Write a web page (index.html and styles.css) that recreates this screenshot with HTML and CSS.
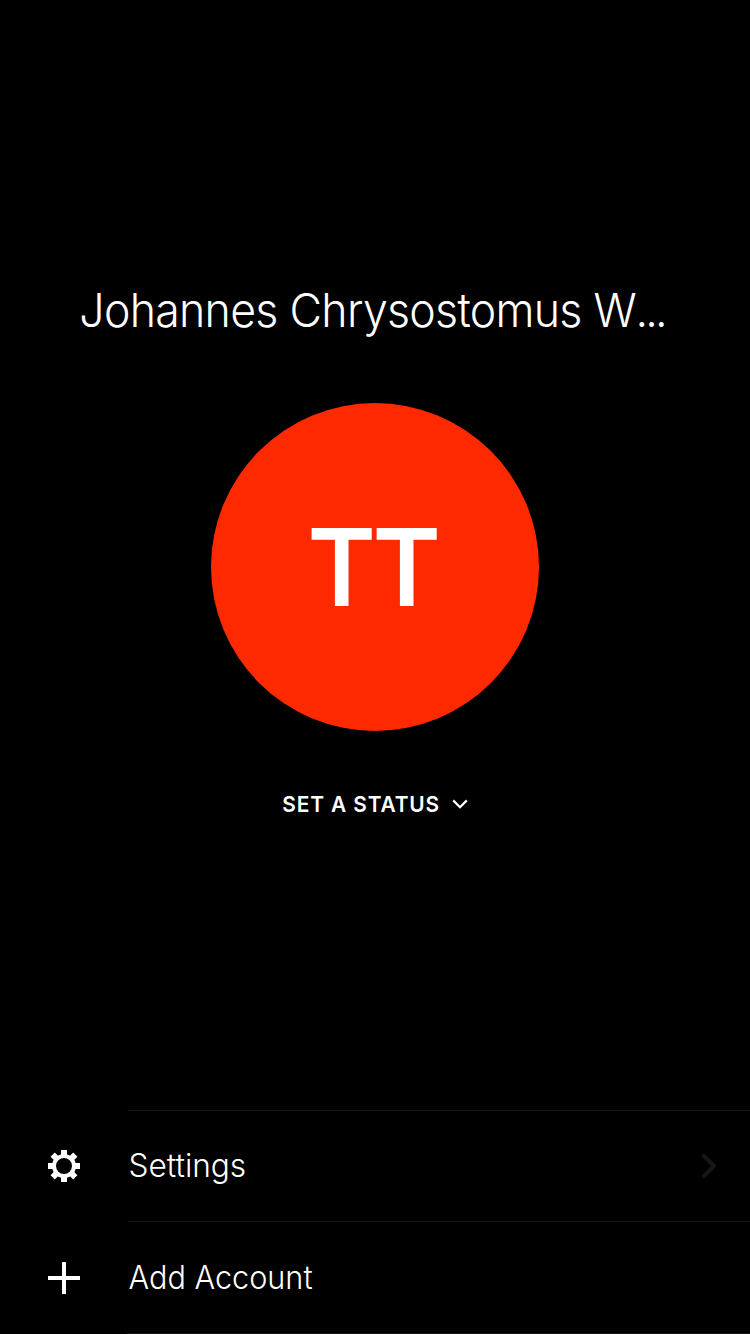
FILE: index.html
```html
<!DOCTYPE html>
<html lang="en">
<head>
<meta charset="utf-8">
<title>Profile</title>
<link rel="stylesheet" href="styles.css">
</head>
<body>
<main class="screen">
  <section class="profile">
    <h1 class="name">Johannes Chrysostomus W<span class="dots">...</span></h1>
    <div class="avatar"><span class="initials">TT</span></div>
    <button class="status"><span class="status-label">SET A STATUS</span>
      <svg class="chevron-down" viewBox="0 0 16 10"><path d="M1.2 1.4 8 8.2l6.8-6.8"/></svg>
    </button>
  </section>
  <nav class="menu">
    <a class="row">
      <svg class="icon" viewBox="0 0 32 32">
        <g fill="#fff"><path id="tooth" d="M13 0h6v6h-6zM13 26h6v6h-6zM0 13h6v6H0zM26 13h6v6h-6z"/><use href="#tooth" transform="rotate(45 16 16)"/></g>
        <circle cx="16" cy="16" r="10" fill="#000" stroke="#fff" stroke-width="4"/>
      </svg>
      <span class="cell"><span class="settings-text">Settings</span>
        <svg class="chevron-right" viewBox="0 0 16 26"><path d="M3 3l10 10L3 23"/></svg>
      </span>
    </a>
    <a class="row">
      <svg class="icon" viewBox="0 0 32 32"><path d="M14 0h4v14h14v4H18v14h-4V18H0v-4h14z" fill="#fff"/></svg>
      <span class="cell"><span class="add-text">Add Account</span></span>
    </a>
  </nav>
</main>
</body>
</html>
```
FILE: styles.css
```css
* { box-sizing: border-box; }
body { margin: 0; background: #000; color: #fff; font-family: Inter, "Liberation Sans", sans-serif; }
.screen { width: 750px; height: 1334px; display: flex; flex-direction: column; justify-content: space-between; overflow: hidden; }
.profile { padding-top: 280px; display: flex; flex-direction: column; align-items: center; }
.name { margin: 0 0 63px; width: 590px; height: 60px; font-size: 47px; line-height: 60px; font-weight: 300; white-space: nowrap; letter-spacing: -0.75px; transform: translate(-0.7px, 0.4px) scaleX(0.95); transform-origin: left; }
.dots { margin-left: -0.5px; letter-spacing: -3px; }
.avatar { width: 328px; height: 328px; border-radius: 50%; background: #ff2900; display: flex; align-items: center; justify-content: center; }
.initials { font-size: 107px; line-height: 128px; font-weight: 600; letter-spacing: -3.5px; transform: translateX(-2.7px) scaleX(0.968); }
.status { margin-top: 57px; height: 32px; padding: 0; border: 0; background: none; color: #fff; font: 600 22px/32px Inter, sans-serif; display: flex; align-items: center; gap: 12px; }
.status-label { width: 158px; letter-spacing: 0.9px; white-space: nowrap; transform: translateX(0.3px) scaleX(0.95); transform-origin: left; }
.chevron-down { width: 16px; height: 10px; fill: none; stroke: #fff; stroke-width: 2.2; }
.menu { height: 224px; border-bottom: 1px solid #171717; border-image: linear-gradient(to right, transparent 128px, #171717 128px) 1; }
.row { height: 111px; display: flex; align-items: center; padding-left: 48px; }
.row + .row { height: 113px; }
.icon { width: 32px; height: 32px; margin-right: 48px; }
.cell { flex: 1; height: 100%; display: flex; align-items: center; justify-content: space-between; border-top: 1px solid #171717; padding-right: 33px; font-size: 32px; font-weight: 300; }
.settings-text, .add-text { transform-origin: left; }
.settings-text { transform: translate(0.5px, -0.6px) scaleX(0.987); }
.add-text { transform: translate(0.5px, -0.6px) scaleX(0.957); }
.chevron-right { width: 16px; height: 26px; fill: none; stroke: #161618; stroke-width: 4; stroke-linecap: round; stroke-linejoin: round; }
```
